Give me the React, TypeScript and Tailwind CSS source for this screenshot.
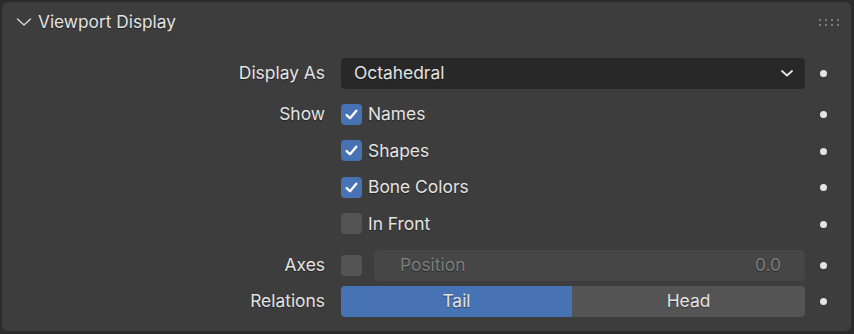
import React from 'react';

const Dot = () => (
    <div className="w-[46px] flex justify-start pl-[15px]">
        <div className="w-[7px] h-[7px] rounded-full bg-[#e4e4e4]" />
    </div>
);

const Check = ({ checked }: { checked: boolean }) => (
    <div className={"w-[21px] h-[21px] rounded-[4px] flex items-center justify-center " + (checked ? "bg-[#4772b3]" : "bg-[#545454]")}>
        {checked && (
            <svg width="15" height="15" viewBox="0 0 14 14">
                <path d="M2.5 7.5 L5.6 10.5 L11.5 3.5" fill="none" stroke="#ffffff" strokeWidth="2.2" strokeLinecap="round" strokeLinejoin="round" />
            </svg>
        )}
    </div>
);

const Row = ({ label, h, className, children }: { label?: string; h: string; className?: string; children: React.ReactNode }) => (
    <div className={"flex items-center " + h + " " + (className || "")}>
        <div className="w-[323px] text-right text-[#e3e3e3] text-[17.4px]">{label}</div>
        <div className="w-[16px]" />
        <div className="w-[464px] flex items-center">{children}</div>
        <Dot />
    </div>
);

const CheckRow = ({ label, text, checked, h, className }: { label?: string; text: string; checked: boolean; h: string; className?: string }) => (
    <Row label={label} h={h} className={className}>
        <Check checked={checked} />
        <span className="ml-[6px] text-[#e3e3e3] text-[17.4px]">{text}</span>
    </Row>
);

export default function App() {
    return (
        <div className="w-[854px] h-[334px] bg-[#2b2b2b] p-[2px] pr-[3px] [text-shadow:0_1px_1px_rgba(0,0,0,0.45)]" style={{ fontFamily: 'Inter, "Noto Sans", sans-serif' }}>
            <div className="h-[329px] rounded-[6px] bg-[#3d3d3d] flex flex-col">
                <div className="h-[40px] flex items-center">
                    <svg className="ml-[14px]" width="16" height="10" viewBox="0 0 16 10">
                        <path d="M1.5 2 L8 8 L14.5 2" fill="none" stroke="#d8d8d8" strokeWidth="1.4" strokeLinecap="round" strokeLinejoin="round" />
                    </svg>
                    <span className="ml-[6px] text-[17.3px] text-[#e3e3e3]">Viewport Display</span>
                    <div className="ml-auto mr-[12px] grid grid-cols-4 gap-x-[4px] gap-y-[3px]">
                        {Array.from({ length: 8 }).map((_, i) => (
                            <div key={i} className="w-[2px] h-[2px] bg-[#7a7a7a]" />
                        ))}
                    </div>
                </div>
                <Row label="Display As" h="h-[36px]" className="mt-[13px]">
                    <div className="w-full h-[31px] rounded-[4px] bg-[#282828] flex items-center px-[13px] text-[17.4px] text-[#e3e3e3]">
                        <span>Octahedral</span>
                        <svg className="ml-auto -mr-[2px]" width="14" height="10" viewBox="0 0 14 10">
                            <path d="M2 3 L7 7.5 L12 3" fill="none" stroke="#e5e5e5" strokeWidth="1.8" strokeLinecap="round" strokeLinejoin="round" />
                        </svg>
                    </div>
                </Row>
                <CheckRow label="Show" text="Names" checked h="h-[37px]" className="mt-[5px]" />
                <CheckRow text="Shapes" checked h="h-[36px]" />
                <CheckRow text="Bone Colors" checked h="h-[37px]" />
                <CheckRow text="In Front" checked={false} h="h-[36px]" />
                <Row label="Axes" h="h-[36px]" className="mt-[5px]">
                    <Check checked={false} />
                    <div className="ml-[12px] flex-1 h-[31px] rounded-[4px] bg-[#464646] flex items-center pl-[26px] pr-[24px] text-[17.4px] text-[#7c7c7c]">
                        <span>Position</span>
                        <span className="ml-auto">0.0</span>
                    </div>
                </Row>
                <Row label="Relations" h="h-[36px]">
                    <div className="w-full h-[31px] flex rounded-[4px] overflow-hidden text-[17.4px] text-[#e3e3e3]">
                        <div className="w-[231px] bg-[#4772b3] flex items-center justify-center">Tail</div>
                        <div className="flex-1 bg-[#545454] flex items-center justify-center">Head</div>
                    </div>
                </Row>
            </div>
        </div>
    );
}
